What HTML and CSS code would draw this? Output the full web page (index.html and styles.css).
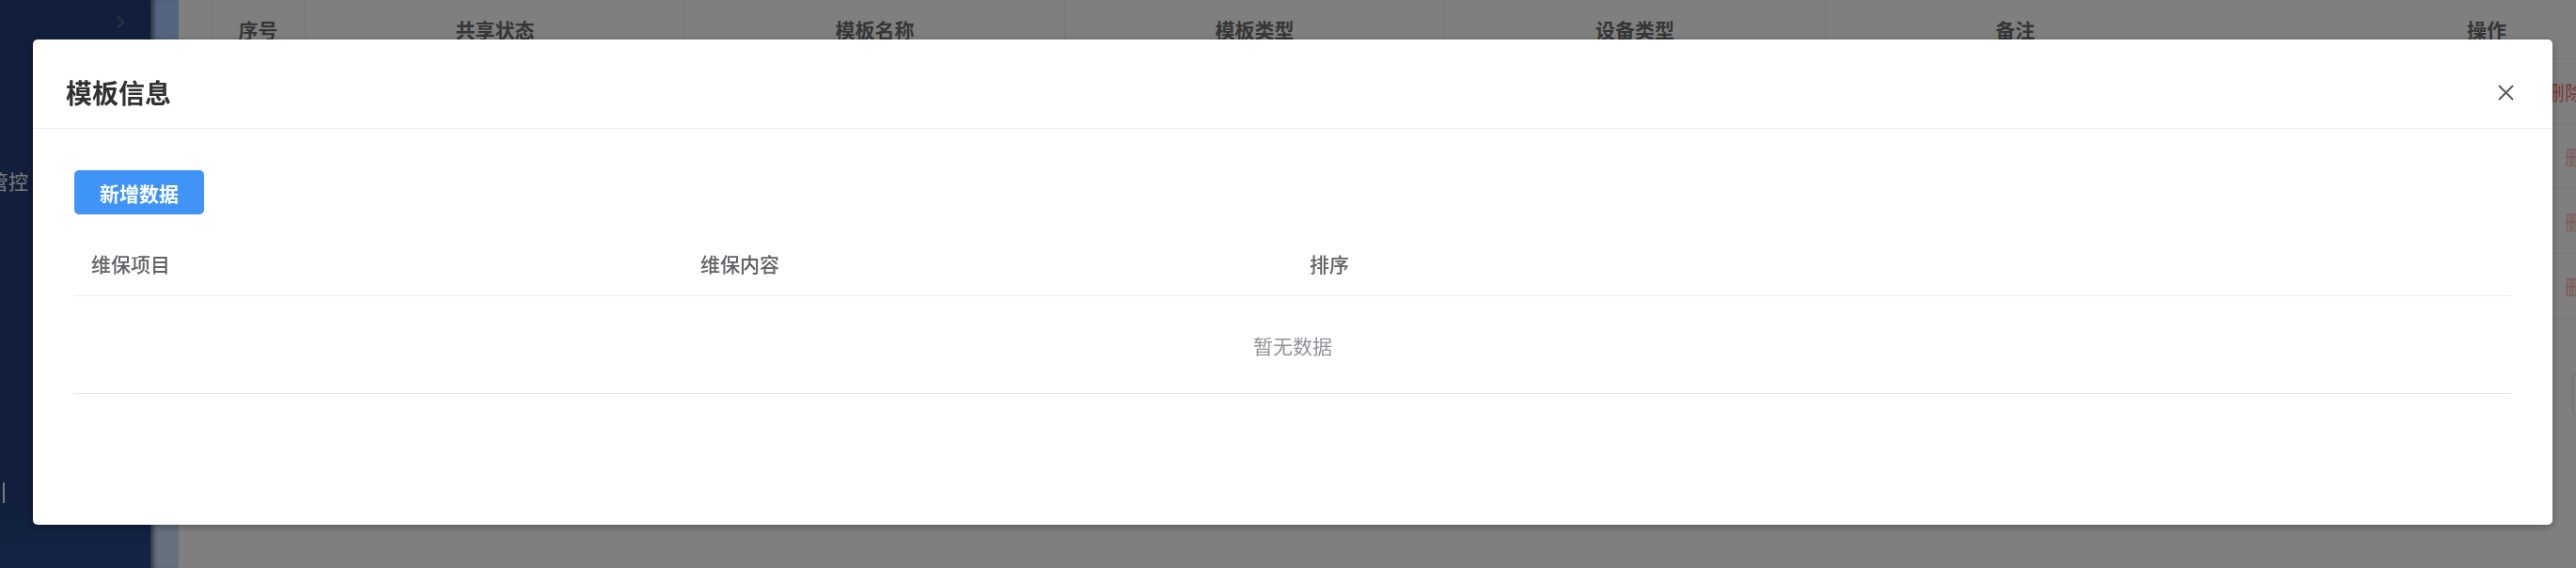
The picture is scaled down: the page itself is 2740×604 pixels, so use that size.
FILE: index.html
```html
<!DOCTYPE html>
<html lang="zh-CN">
<head>
  <meta charset="UTF-8">
  <title>模板信息</title>
  <link rel="stylesheet" href="styles.css">
</head>
<body>
  <div class="layout">
    <aside class="sidebar">
      <div class="collapse">
        <svg width="10" height="15" viewBox="0 0 10 15"><path d="M2 1.5 L8 7.5 L2 13.5" fill="none" stroke="#5d6579" stroke-width="2.2"/></svg>
      </div>
      <div class="menu-item">管控</div>
      <div class="caret"></div>
    </aside>
    <div class="rail"></div>

    <main class="main">
      <div class="list">
        <div class="list-row list-head">
          <span class="cell sep"></span>
          <span class="cell sep">序号</span>
          <span class="cell sep">共享状态</span>
          <span class="cell sep">模板名称</span>
          <span class="cell sep">模板类型</span>
          <span class="cell sep">设备类型</span>
          <span class="cell">备注</span>
          <span class="cell">操作</span>
        </div>
        <div class="list-row">
          <span></span><span></span><span></span><span></span><span></span><span></span><span></span>
          <span class="ops ops-wide"><a class="del">删除</a></span>
        </div>
        <div class="list-row">
          <span></span><span></span><span></span><span></span><span></span><span></span><span></span>
          <span class="ops"><a class="del off">删除</a></span>
        </div>
        <div class="list-row">
          <span></span><span></span><span></span><span></span><span></span><span></span><span></span>
          <span class="ops"><a class="del off">删除</a></span>
        </div>
        <div class="list-row">
          <span></span><span></span><span></span><span></span><span></span><span></span><span></span>
          <span class="ops"><a class="del off">删除</a></span>
        </div>
      </div>
      <div class="pager"><span class="pager-box"></span></div>
    </main>
  </div>

  <div class="mask"></div>

  <div class="dialog-wrap">
    <div class="dialog">
      <div class="dialog-header">
        <span class="dialog-title">模板信息</span>
        <button class="dialog-close" aria-label="关闭">
          <svg width="17" height="17" viewBox="0 0 17 17"><path d="M1 1 L16 16 M16 1 L1 16" stroke="#555" stroke-width="1.8" fill="none"/></svg>
        </button>
      </div>
      <div class="dialog-body">
        <button class="btn-primary">新增数据</button>
        <div class="table">
          <div class="table-head">
            <span class="th">维保项目</span>
            <span class="th">维保内容</span>
            <span class="th">排序</span>
          </div>
          <div class="table-empty">暂无数据</div>
        </div>
      </div>
    </div>
  </div>
</body>
</html>
```

FILE: styles.css
```css
* {
  box-sizing: border-box;
}

body {
  margin: 0;
  width: 2740px;
  height: 604px;
  overflow: hidden;
  font-family: "Noto Sans CJK SC", "Noto Sans", sans-serif;
  background: #fff;
}

.layout {
  display: flex;
  height: 604px;
}

/* menu laterale */
.sidebar {
  width: 160px;
  flex-shrink: 0;
  background: linear-gradient(to bottom, #223e78 0%, #223e78 88%, #27498c 100%);
  overflow: hidden;
}

.collapse {
  height: 47px;
  display: flex;
  align-items: center;
  justify-content: flex-end;
  padding-right: 27px;
}

.menu-item {
  margin-top: 124px;
  margin-left: -12px;
  line-height: 42px;
  font-size: 21px;
  color: #eef1f6;
  white-space: nowrap;
}

.caret {
  margin: 300px 0 0 3px;
  width: 2px;
  height: 22px;
  background: #f4f4f4;
}

.rail {
  width: 30px;
  flex-shrink: 0;
  background: linear-gradient(to bottom, #a8cafe, #cce0fa);
  box-shadow: inset 6px 0 5px -3px rgba(0, 0, 0, 0.55);
}

.main {
  flex: 1;
  overflow: hidden;
  background: #fff;
}

.list {
  --cols: 35px 100px 404px 404px 404px 405px 403px 600px;
  width: max-content;
}

.list-row {
  display: grid;
  grid-template-columns: var(--cols);
  height: 69px;
  border-bottom: 1px solid #ebeef5;
}

.list-head {
  height: 63px;
}

.cell {
  display: flex;
  align-items: center;
  justify-content: center;
  font-size: 21px;
  font-weight: bold;
  color: #6c6c6c;
}

.sep {
  border-right: 1px solid #ebeef5;
}

.ops {
  display: flex;
  align-items: center;
  padding-left: 383px;
  font-size: 21px;
}

.ops-wide {
  padding-left: 362px;
}

.del {
  color: #f56c6c;
}

.del.off {
  color: #fab6b6;
}

.pager {
  margin: 58px 0 0 2546px;
}

.pager-box {
  display: block;
  width: 60px;
  height: 46px;
  border: 1px solid #dcdfe6;
  border-radius: 5px;
}

/* velo scuro sopra la pagina */
.mask {
  position: fixed;
  inset: 0;
  background: rgba(0, 0, 0, 0.5);
}

.dialog-wrap {
  position: fixed;
  inset: 0;
  padding: 42px 0 0 35px;
}

.dialog {
  width: 2680px;
  background: #fff;
  border-radius: 5px;
  box-shadow: 0 2px 8px rgba(0, 0, 0, 0.3);
}

.dialog-header {
  display: flex;
  align-items: center;
  justify-content: space-between;
  padding: 35px 41px 17px 35px;
  border-bottom: 1px solid #ebeef5;
}

.dialog-title {
  font-size: 28px;
  line-height: 42px;
  font-weight: bold;
  color: #303133;
}

.dialog-close {
  display: flex;
  padding: 0;
  border: none;
  background: transparent;
  cursor: pointer;
}

.dialog-body {
  padding: 44px 44px 139px;
}

.btn-primary {
  display: block;
  width: 138px;
  height: 47px;
  padding: 0;
  border: none;
  border-radius: 5px;
  background: #4094f7;
  color: #fff;
  font-family: inherit;
  font-size: 21px;
  font-weight: bold;
  cursor: pointer;
}

.table {
  margin-top: 18px;
}

.table-head {
  display: grid;
  grid-template-columns: 648px 648px 1fr;
  height: 69px;
  border-bottom: 1px solid #efefe8;
}

.th {
  display: flex;
  align-items: center;
  padding-left: 18px;
  font-size: 21px;
  font-weight: 500;
  color: #606266;
}

.table-empty {
  height: 104px;
  display: flex;
  align-items: center;
  justify-content: center;
  border-bottom: 1px solid #e6e6e6;
  font-size: 21px;
  color: #909399;
}
```
